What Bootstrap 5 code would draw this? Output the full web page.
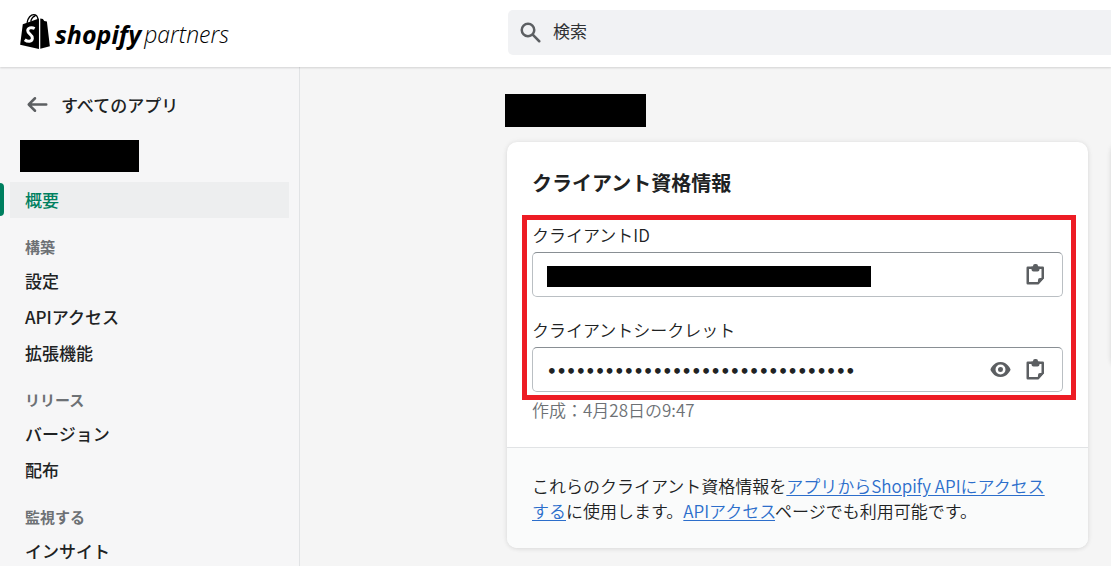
<!DOCTYPE html>
<html lang="ja">
<head>
<meta charset="utf-8">
<meta name="viewport" content="width=device-width, initial-scale=1">
<title>Shopify Partners</title>
<link href="https://cdn.jsdelivr.net/npm/bootstrap@5.3.0/dist/css/bootstrap.min.css" rel="stylesheet">
<style>
  body { font-family: "Noto Sans CJK JP", sans-serif; font-size: 17px; font-weight: 350; line-height: 25px; color: #202223; background: #f6f6f7; overflow: hidden; }
  .icon { width: 25px; height: 25px; fill: #5c5f62; flex: none; display: block; }
  .topbar { height: 67px; background: #fff; box-shadow: 0 1px 2px rgba(0,0,0,.15); position: relative; z-index: 1; }
  .brand-area { flex: 0 0 508px; padding: 14px 0 0 20px; color: #000; }
  .brand { color: #000; font-family: "Open Sans", sans-serif; font-style: italic; line-height: 40px; }
  .brand-bag { width: 30px; height: 35px; flex: none; margin-right: 5px; }
  .brand-main { font-weight: 700; font-size: 25px; }
  .brand-sub { font-weight: 300; font-size: 23px; margin-left: 3px; }
  .search { height: 45px; margin-top: 10px; padding-left: 10px; gap: 10px; background: #f1f2f4; border-radius: 5px 0 0 5px; }
  .search input { font-size: 17px; color: #303234; background: none; border: 0; outline: 0; padding: 0 0 4px; min-width: 0; }
  .search input::placeholder { color: #303234; opacity: 1; }
  .sidebar { flex: 0 0 300px; border-right: 1px solid #e1e3e5; padding-top: 19px; font-weight: 500; min-height: calc(100vh - 67px); }
  .sidebar a { color: #202223; text-decoration: none; }
  .back { height: 36px; padding-left: 25px; gap: 11px; }
  .redacted { background: #000; }
  .app-name { width: 119px; height: 32px; margin: 18px 0 10px 20px; }
  .side-item { height: 36px; padding: 0 15px; margin: 0 10px; line-height: 36px; display: block; }
  .sidebar .side-item.active { color: #008060; background: #edeeef; position: relative; }
  .side-item.active::before { content: ""; position: absolute; left: -10px; top: 1px; bottom: 2px; width: 4px; background: #008060; border-radius: 0 4px 4px 0; }
  .side-head { font-size: 15px; font-weight: 700; line-height: 32px; color: #6d7175; margin: 13px 0 0 25px; }
  .page { padding: 27px 0 0 207px; gap: 22px; min-width: 0; overflow: hidden; background: #f5f5f5; }
  .page-name { width: 141px; height: 33px; margin: 0 0 15px -2px; }
  .panel { background: #fff; border-radius: 10px; box-shadow: 0 0 6px rgba(23,24,24,.06), 0 1px 4px rgba(0,0,0,.08); }
  .panel-main { padding: 25px; }
  .panel h2 { font-size: 20px; line-height: 32px; font-weight: 700; margin-bottom: 16px; }
  .highlight { border: 5px solid #ed1c24; padding: 3px 8px 3px 5px; margin: 0 -13px 0 -10px; }
  .highlight label { line-height: 24px; margin-bottom: 5px; display: block; }
  .field { height: 45px; border: 1px solid #babfc3; border-top-color: #898f94; border-radius: 5px; padding: 0 14px; gap: 10px; }
  .field + label { margin-top: 21px; }
  .field input { border: 0; outline: 0; padding: 0; min-width: 0; background: none; color: #202223; }
  .field input[type=password] { font-family: "DejaVu Sans Mono", monospace; font-weight: 700; font-size: 16px; padding-top: 3px; }
  .field input.masked { flex: 0 1 324px; height: 21px; margin-top: 3px; background: #000; color: #000; }
  .field button { border: 0; background: none; padding: 0; }
  .created { line-height: 20px; margin-bottom: 2px; color: #6d7175; }
  .panel-note { background: #fafbfb; border-top: 1px solid #e1e3e5; border-radius: 0 0 10px 10px; padding: 25px; }
  .panel-note p { padding-right: 6px; margin: 0; }
  .panel-note a { color: #2c6ecb; text-underline-offset: 2px; }
  .side-panel { flex: 0 0 320px; margin: 48px -320px 0 1px; height: 226px; }
</style>
</head>
<body>
<header class="topbar d-flex">
  <div class="brand-area">
    <a class="brand d-inline-flex text-decoration-none" href="#" aria-label="shopify partners">
      <svg class="brand-bag" viewBox="0 0 90 106" aria-hidden="true">
        <path d="M8 31 57 14 57 106 0 93Z M61 14 69 15 73 21 81 23 90 98 61 105Z" fill="#000"/>
        <path d="M21 27C23 11 33 2 41 2 49 2 53 8 54 16M32 23C34 12 41 6 46 7" fill="none" stroke="#000" stroke-width="4"/>
        <path d="M44 44C34 39 23 42 23 51 23 61 38 62 37 74 36 85 23 85 14 78" fill="none" stroke="#fff" stroke-width="9"/>
      </svg>
      <span class="brand-main">shopify</span><span class="brand-sub">partners</span>
    </a>
  </div>
  <form class="search d-flex align-items-center flex-grow-1" role="search">
    <svg class="icon" viewBox="0 0 20 20" aria-hidden="true"><path d="M8 12a4 4 0 1 1 0-8 4 4 0 0 1 0 8zm9.707 4.293-4.82-4.82A5.968 5.968 0 0 0 14 8 6 6 0 0 0 2 8a6 6 0 0 0 6 6 5.968 5.968 0 0 0 3.473-1.113l4.82 4.82a.997.997 0 0 0 1.414 0 .999.999 0 0 0 0-1.414z"/></svg>
    <input class="flex-grow-1" type="search" placeholder="検索" aria-label="検索">
  </form>
</header>

<div class="d-flex">
  <nav class="sidebar">
    <a class="back d-flex align-items-center" href="#">
      <svg class="icon" viewBox="0 0 20 20" aria-hidden="true"><path d="M17 9H5.414l3.293-3.293a.999.999 0 1 0-1.414-1.414l-5 5a.999.999 0 0 0 0 1.414l5 5a.997.997 0 0 0 1.414 0 .999.999 0 0 0 0-1.414L5.414 11H17a1 1 0 1 0 0-2z"/></svg>
      すべてのアプリ
    </a>
    <div class="redacted app-name"></div>
    <a class="side-item active" href="#">概要</a>
    <div class="side-head">構築</div>
    <a class="side-item" href="#">設定</a>
    <a class="side-item" href="#">APIアクセス</a>
    <a class="side-item" href="#">拡張機能</a>
    <div class="side-head">リリース</div>
    <a class="side-item" href="#">バージョン</a>
    <a class="side-item" href="#">配布</a>
    <div class="side-head">監視する</div>
    <a class="side-item" href="#">インサイト</a>
  </nav>

  <main class="page d-flex align-items-start flex-grow-1">
    <div class="flex-grow-1">
      <div class="redacted page-name"></div>
      <section class="panel">
        <div class="panel-main">
          <h2>クライアント資格情報</h2>
          <div class="highlight">
            <label for="client-id">クライアントID</label>
            <div class="field d-flex align-items-center">
              <input class="masked" id="client-id" type="text" readonly>
              <button class="ms-auto" type="button" aria-label="コピー">
                <svg class="icon" viewBox="0 0 25 25" aria-hidden="true"><path d="M4.750 5.750H19.750V16L15 21.250H4.750Z" fill="none" stroke="#5c5f62" stroke-width="2.500" stroke-linejoin="round"/><path d="M8.500 4.500H10V4Q10 2 12 2H13Q15 2 15 4V4.500H16.500V7.500Q16.500 9.500 14.500 9.500H10.500Q8.500 9.500 8.500 7.500ZM21 16H17Q15 16 15 18V22.500Z"/></svg>
              </button>
            </div>
            <label for="client-secret">クライアントシークレット</label>
            <div class="field d-flex align-items-center">
              <input class="flex-grow-1" id="client-secret" type="password" value="00000000000000000000000000000000" readonly>
              <button type="button" aria-label="表示">
                <svg class="icon" viewBox="0 0 20 20" aria-hidden="true"><path d="M17.928 9.628c-.092-.229-2.317-5.628-7.929-5.628s-7.837 5.399-7.929 5.628a1.017 1.017 0 0 0 0 .744c.092.229 2.317 5.628 7.929 5.628s7.837-5.399 7.929-5.628a1.017 1.017 0 0 0 0-.744m-7.929 4.372a4 4 0 1 1 0-8 4 4 0 0 1 0 8m0-6a2 2 0 1 0 .002 4.001 2 2 0 0 0-.002-4.001"/></svg>
              </button>
              <button type="button" aria-label="コピー">
                <svg class="icon" viewBox="0 0 25 25" aria-hidden="true"><path d="M4.750 5.750H19.750V16L15 21.250H4.750Z" fill="none" stroke="#5c5f62" stroke-width="2.500" stroke-linejoin="round"/><path d="M8.500 4.500H10V4Q10 2 12 2H13Q15 2 15 4V4.500H16.500V7.500Q16.500 9.500 14.500 9.500H10.500Q8.500 9.500 8.500 7.500ZM21 16H17Q15 16 15 18V22.500Z"/></svg>
              </button>
            </div>
          </div>
          <div class="created">作成：4月28日の9:47</div>
        </div>
        <div class="panel-note">
          <p>これらのクライアント資格情報を<a href="#">アプリからShopify APIにアクセスする</a>に使用します。<a href="#">APIアクセス</a>ページでも利用可能です。</p>
        </div>
      </section>
    </div>
    <aside class="panel side-panel"></aside>
  </main>
</div>
<script src="https://cdn.jsdelivr.net/npm/bootstrap@5.3.0/dist/js/bootstrap.bundle.min.js"></script>
</body>
</html>
